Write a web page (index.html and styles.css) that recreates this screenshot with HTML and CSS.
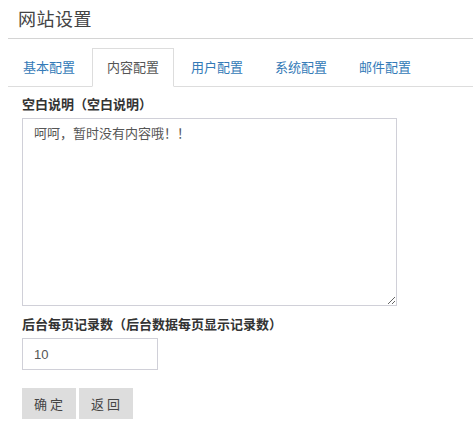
FILE: index.html
```html
<!DOCTYPE html>
<html lang="zh-CN">
<head>
  <meta charset="UTF-8">
  <title>网站设置</title>
  <link rel="stylesheet" href="styles.css">
</head>
<body>
  <div class="page">
    <div class="title">网站设置</div>
    <!-- 配置分类标签 -->
    <ul class="tabs">
      <li class="tab">基本配置</li>
      <li class="tab active">内容配置</li>
      <li class="tab">用户配置</li>
      <li class="tab">系统配置</li>
      <li class="tab">邮件配置</li>
    </ul>
    <form class="form">
      <div class="group">
        <label class="label">空白说明（空白说明）</label>
        <textarea class="textarea">呵呵，暂时没有内容哦！！</textarea>
      </div>
      <div class="group">
        <label class="label">后台每页记录数（后台数据每页显示记录数）</label>
        <input class="input" type="text" value="10">
      </div>
      <div class="actions">
        <button type="button" class="btn">确定</button>
        <button type="button" class="btn">返回</button>
      </div>
    </form>
  </div>
</body>
</html>
```

FILE: styles.css
```css
body {
  margin: 0;
  font-family: "Liberation Sans", "Noto Sans CJK SC", sans-serif;
  font-size: 13px;
  color: #333;
  background: #fff;
}
.page {
  padding-left: 8px;
}
.title {
  height: 39px;
  box-sizing: border-box;
  padding: 8px 10px 0;
  font-size: 18px;
  letter-spacing: 0.5px;
  line-height: 24px;
  color: #444;
  border-bottom: 1px solid #d4d4d4;
}
.tabs {
  display: flex;
  margin: 9px 0 0;
  padding: 0;
  list-style: none;
  border-bottom: 1px solid #ddd;
}
.tab {
  padding: 10px 14px;
  margin-right: 2px;
  margin-bottom: -1px;
  line-height: 17px;
  color: #337ab7;
  border: 1px solid transparent;
}
.tab.active {
  color: #555;
  background: #fff;
  border-color: #ddd;
  border-bottom-color: #fff;
}
.form {
  padding: 9px 14px 0;
}
.group {
  margin-bottom: 10px;
}
.label {
  display: block;
  margin-bottom: 4px;
  font-weight: bold;
  line-height: 18px;
  color: #333;
}
.textarea {
  display: block;
  width: 375px;
  height: 188px;
  box-sizing: border-box;
  margin: 0;
  padding: 5px 11px;
  font-family: inherit;
  font-size: 13px;
  line-height: 20px;
  color: #555;
  border: 1px solid #d0d0d8;
  resize: both;
}
.input {
  display: block;
  width: 136px;
  height: 32px;
  box-sizing: border-box;
  margin: 0;
  padding: 0 11px;
  font-family: inherit;
  font-size: 13px;
  color: #555;
  border: 1px solid #d0d0d8;
}
.actions {
  display: flex;
  gap: 3px;
  margin-top: 18px;
}
.btn {
  height: 31px;
  padding: 0 10px 0 12px;
  font-family: inherit;
  font-size: 13px;
  letter-spacing: 3px;
  color: #444;
  background: #ddd;
  border: none;
}
```
